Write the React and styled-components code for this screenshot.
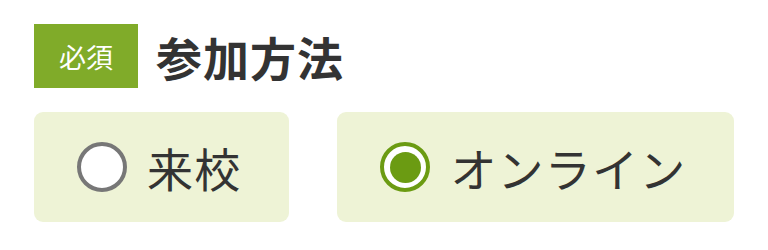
import styled, { createGlobalStyle } from 'styled-components';

const GlobalStyle = createGlobalStyle`
  body {
    margin: 0;
    background: #fff;
    font-family: "Noto Sans CJK JP", "Noto Sans", sans-serif;
    color: #333;
  }
`;

const Field = styled.fieldset`
  border: none;
  margin: 0;
  padding: 24px 0 0 34px;
`;

const Legend = styled.div`
  display: flex;
  align-items: center;
  gap: 18px;
  height: 64px;
`;

const Badge = styled.span`
  display: flex;
  align-items: center;
  justify-content: center;
  width: 104px;
  height: 64px;
  background: #80ab29;
  color: #fff;
  font-size: 27px;
  font-weight: 400;
`;

const Title = styled.h2`
  margin: 0;
  font-size: 46px;
  font-weight: 700;
  color: #333;
  letter-spacing: 1px;
`;

const Options = styled.div`
  display: flex;
  gap: 48px;
  margin-top: 24px;
`;

const Option = styled.label`
  display: inline-flex;
  align-items: center;
  gap: 20px;
  height: 110px;
  padding: 0 48px 0 43px;
  background: #eef3d6;
  border-radius: 9px;
  font-size: 46px;
  letter-spacing: 1.2px;
  color: #333;
  cursor: pointer;
`;

const Radio = styled.span`
  box-sizing: border-box;
  width: 50px;
  height: 50px;
  border-radius: 50%;
  background: #fff;
  border: 4px solid ${({ checked }) => (checked ? '#6b9b12' : '#777')};
  display: flex;
  align-items: center;
  justify-content: center;

  &::after {
    content: '';
    display: ${({ checked }) => (checked ? 'block' : 'none')};
    width: 31px;
    height: 31px;
    border-radius: 50%;
    background: #6b9b12;
  }
`;

const options = [
  { label: '来校', checked: false },
  { label: 'オンライン', checked: true },
];

export default function App() {
  return (
    <>
      <GlobalStyle />
      <Field>
        <Legend>
          <Badge>必須</Badge>
          <Title>参加方法</Title>
        </Legend>
        <Options>
          {options.map((o) => (
            <Option key={o.label}>
              <Radio checked={o.checked} />
              {o.label}
            </Option>
          ))}
        </Options>
      </Field>
    </>
  );
}
